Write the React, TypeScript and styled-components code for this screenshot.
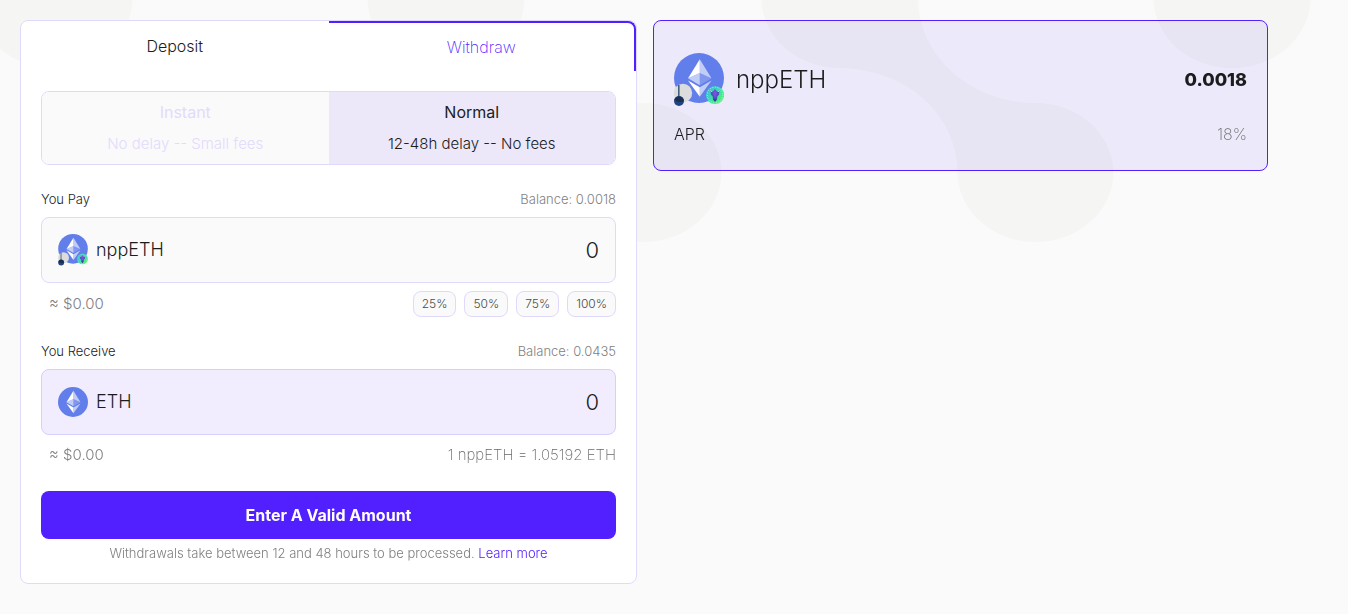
import React, { useState } from "react";
import styled, { createGlobalStyle } from "styled-components";

const c = {
  primary: "#521fff",
  border: "#dfd9fb",
  ground: "#fafafa",
  tint: "rgba(80, 40, 255, 0.08)",
  blob: "#f5f5f3",
  text: "#1c1c1c",
  muted: "#7f7f7f",
};

const GlobalStyle = createGlobalStyle`
  * { box-sizing: border-box; }
  body {
    margin: 0;
    background: ${c.ground};
    color: ${c.text};
    font-family: Inter, "Liberation Sans", sans-serif;
    font-weight: 300;
    font-size: 15px;
    line-height: 24px;
  }
  button, input { font: inherit; color: inherit; margin: 0; }
  button { cursor: pointer; }
`;

const Backdrop = styled.svg`
  position: fixed;
  inset: 0;
  width: 100%;
  height: 100%;
  z-index: -1;
`;

const Page = styled.main`
  display: grid;
  grid-template-columns: minmax(0, 617fr) minmax(0, 615fr);
  align-items: start;
  gap: 16px;
  padding: 20px 80px 20px 20px;
`;

const Card = styled.section`
  background: #fff;
  border: 1px solid ${c.border};
  border-radius: 8px;
`;

const Tabs = styled.div`
  display: grid;
  grid-template-columns: 1fr 1fr;
`;

const Tab = styled.button<{ $active: boolean }>`
  height: 50px;
  padding: 0;
  background: none;
  border: 0 solid ${c.primary};
  border-width: ${(p) => (p.$active ? "2px 2px 0 0" : "0")};
  border-top-right-radius: ${(p) => (p.$active ? "8px" : "0")};
  color: ${(p) => (p.$active ? c.primary : c.text)};
  font-size: 16px;
  font-weight: ${(p) => (p.$active ? 200 : 300)};
`;

const Body = styled.form`
  display: flex;
  flex-direction: column;
  gap: 24px;
  padding: 20px;
`;

const Modes = styled.div`
  display: grid;
  grid-template-columns: 1fr 1fr;
  border: 1px solid ${c.border};
  border-radius: 8px;
  overflow: hidden;
`;

const Mode = styled.button<{ $active: boolean }>`
  display: flex;
  flex-direction: column;
  align-items: center;
  gap: 8px;
  padding: 8px;
  border: 0;
  background: ${(p) => (p.$active ? "#ece8fa" : c.ground)};
  color: ${(p) => (p.$active ? c.text : "#e2dbfc")};
`;

const ModeName = styled.span`
  font-size: 16px;
  font-weight: 400;
`;

const Field = styled.div`
  display: flex;
  flex-direction: column;
  gap: 8px;
`;

const Row = styled.div`
  display: flex;
  align-items: center;
  justify-content: space-between;
`;

const Caption = styled(Row)`
  font-size: 13px;
  line-height: 20px;
`;

const Muted = styled.span`
  color: ${c.muted};
`;

const Estimate = styled(Muted)`
  padding-left: 8px;
`;

const Rate = styled(Muted)`
  color: #6a6a6a;
  font-weight: 200;
`;

const AmountBox = styled.div<{ $tinted?: boolean }>`
  display: flex;
  align-items: center;
  gap: 8px;
  height: 66px;
  padding: 0 16px;
  border: 1px solid ${(p) => (p.$tinted ? "#d6cefb" : c.border)};
  border-radius: 8px;
  background: ${(p) => (p.$tinted ? "#f1edff" : c.ground)};
  font-size: 18px;
`;

const AmountInput = styled.input`
  flex: 1;
  min-width: 0;
  padding: 0;
  border: 0;
  outline: 0;
  background: none;
  text-align: right;
  font-size: 22px;
`;

const Chips = styled.div`
  display: flex;
  gap: 8px;
`;

const Chip = styled.button`
  height: 26px;
  padding: 0 8px;
  border: 1px solid ${c.border};
  border-radius: 8px;
  background: ${c.ground};
  color: #4a4a4a;
  font-size: 12px;
`;

const Actions = styled.div`
  display: flex;
  flex-direction: column;
  gap: 4px;
`;

const Submit = styled.button`
  height: 48px;
  border: 0;
  border-radius: 8px;
  background: ${c.primary};
  color: #fff;
  font-size: 16px;
  font-weight: 700;
`;

const Note = styled.p`
  margin: 0;
  color: ${c.muted};
  font-size: 13px;
  line-height: 20px;
  text-align: center;
`;

const Link = styled.a`
  color: ${c.primary};
  text-decoration: none;
`;

const Position = styled.section`
  padding: 20px;
  border: 1px solid ${c.primary};
  border-radius: 8px;
  background: ${c.tint};
`;

const PositionHead = styled(Row)`
  padding: 12px 0;
`;

const PositionToken = styled.div`
  display: flex;
  align-items: center;
  gap: 12px;
  font-size: 24px;
`;

const PositionAmount = styled.strong`
  font-size: 18px;
  font-weight: 800;
`;

const PositionStat = styled(Row)`
  padding: 4px 0;
  font-size: 16px;
  line-height: 23px;
`;

function EthMark() {
  return (
    <>
      <circle cx="16" cy="16" r="16" fill="#627eea" />
      <g fill="#fff">
        <path fillOpacity=".602" d="M16.498 4v8.87l7.497 3.35z" />
        <path d="M16.498 4L9 16.22l7.498-3.35z" />
        <path fillOpacity=".602" d="M16.498 21.968v6.027L24 17.616z" />
        <path d="M16.498 27.995v-6.028L9 17.616z" />
        <path fillOpacity=".2" d="M16.498 20.573l7.497-4.353-7.497-3.348z" />
        <path fillOpacity=".602" d="M9 16.22l7.498 4.353v-7.701z" />
      </g>
    </>
  );
}

function EthIcon() {
  return (
    <svg width="30" height="30" viewBox="0 0 32 32" aria-hidden="true">
      <EthMark />
    </svg>
  );
}

function NppEthIcon({ width, height }: { width: number; height: number }) {
  return (
    <svg width={width} height={height} viewBox="0 0 50 54" aria-hidden="true">
      <defs>
        <linearGradient id="badge" x1="0" y1="0" x2="1" y2="1">
          <stop offset="0" stopColor="#35b5e6" />
          <stop offset=".5" stopColor="#3fdcb0" />
          <stop offset="1" stopColor="#5dff5a" />
        </linearGradient>
      </defs>
      <g transform="scale(1.5625)">
        <EthMark />
      </g>
      <circle cx="9" cy="40" r="9.2" fill="#dcdcdc" />
      <path d="M4.8 32v13" stroke="#47607c" strokeWidth="1.6" />
      <circle cx="5" cy="48" r="5" fill="#1f447f" />
      <path d="M.4 46.2a5 5 0 0 1 9.4 1.6C7 50 2 49 .4 46.2z" fill="#1a2f52" />
      <circle cx="41" cy="42" r="9.1" fill="url(#badge)" />
      <circle cx="41" cy="42" r="7.8" fill="none" stroke="#b4f8dc" strokeWidth=".9" strokeDasharray="1 1.6" />
      <path d="M36.6 37.4l2.2 1.4 2.2-2.6 2.2 2.6 2.2-1.4-.4 4.4-1.6 1.4-.4 3.4-2 2-2-2-.4-3.4-1.6-1.4z" fill="#4a55b4" />
      <path d="M41 36l2.200 4.400L41 45l-2.200-4.600z" fill="#7b4fe0" />
      <path d="M39.400 45.600l1.600 1 1.600-1-.4 2-1.200 1.200-1.200-1.200z" fill="#2a3f86" />
      <path d="M36.600 37.400l1.400 1.600M45.400 37.400L44 39" stroke="#f4d5e6" strokeWidth=".9" />
    </svg>
  );
}

const blobs = [54, 446, 1232];

function Blobs() {
  return (
    <Backdrop viewBox="0 0 1348 614" preserveAspectRatio="xMinYMin slice" aria-hidden="true">
      <g fill={c.blob}>
        {blobs.map((x) => (
          <ellipse key={x} cx={x} cy="-2" rx="78.500" ry="70" />
        ))}
        <ellipse cx="643" cy="172.500" rx="78.500" ry="69.500" />
        <path d="M761.500-2A78 70 0 0 0 839 68A118 104 0 0 1 957.500 172A78 70 0 0 0 1113.500 172A78 70 0 0 0 1035 103A117 105 0 0 1 918-2z" />
      </g>
    </Backdrop>
  );
}

const BALANCE = 0.0018;
const RATE = 1.05192;

export default function App() {
  const [tab, setTab] = useState("Withdraw");
  const [mode, setMode] = useState("Normal");
  const [amount, setAmount] = useState("0");
  const received = Number(amount) ? String(Number(amount) * RATE) : "0";

  return (
    <>
      <GlobalStyle />
      <Blobs />
      <Page>
        <Card>
          <Tabs role="tablist">
            {["Deposit", "Withdraw"].map((name) => (
              <Tab
                key={name}
                type="button"
                role="tab"
                aria-selected={tab === name}
                $active={tab === name}
                onClick={() => setTab(name)}
              >
                {name}
              </Tab>
            ))}
          </Tabs>
          <Body onSubmit={(e) => e.preventDefault()}>
            <Modes>
              {[
                ["Instant", "No delay -- Small fees"],
                ["Normal", "12-48h delay -- No fees"],
              ].map(([name, detail]) => (
                <Mode
                  key={name}
                  type="button"
                  aria-pressed={mode === name}
                  $active={mode === name}
                  onClick={() => setMode(name)}
                >
                  <ModeName>{name}</ModeName>
                  <span>{detail}</span>
                </Mode>
              ))}
            </Modes>

            <Field>
              <Caption>
                <label htmlFor="pay">You Pay</label>
                <Muted>Balance: 0.0018</Muted>
              </Caption>
              <AmountBox>
                <NppEthIcon width={30} height={32} />
                <span>nppETH</span>
                <AmountInput
                  id="pay"
                  inputMode="decimal"
                  value={amount}
                  onChange={(e) => setAmount(e.target.value)}
                />
              </AmountBox>
              <Row>
                <Estimate>≈ $0.00</Estimate>
                <Chips>
                  {[25, 50, 75, 100].map((pct) => (
                    <Chip
                      key={pct}
                      type="button"
                      onClick={() => setAmount(String((BALANCE * pct) / 100))}
                    >
                      {`${pct}%`}
                    </Chip>
                  ))}
                </Chips>
              </Row>
            </Field>

            <Field>
              <Caption>
                <label htmlFor="receive">You Receive</label>
                <Muted>Balance: 0.0435</Muted>
              </Caption>
              <AmountBox $tinted>
                <EthIcon />
                <span>ETH</span>
                <AmountInput id="receive" value={received} readOnly />
              </AmountBox>
              <Row>
                <Estimate>≈ $0.00</Estimate>
                <Rate>1 nppETH = 1.05192 ETH</Rate>
              </Row>
            </Field>

            <Actions>
              <Submit type="submit">Enter A Valid Amount</Submit>
              <Note>
                Withdrawals take between 12 and 48 hours to be processed.{" "}
                <Link href="#learn-more">Learn more</Link>
              </Note>
            </Actions>
          </Body>
        </Card>

        <Position>
          <PositionHead>
            <PositionToken>
              <NppEthIcon width={50} height={54} />
              <span>nppETH</span>
            </PositionToken>
            <PositionAmount>0.0018</PositionAmount>
          </PositionHead>
          <PositionStat>
            <span>APR</span>
            <Rate>18%</Rate>
          </PositionStat>
        </Position>
      </Page>
    </>
  );
}
